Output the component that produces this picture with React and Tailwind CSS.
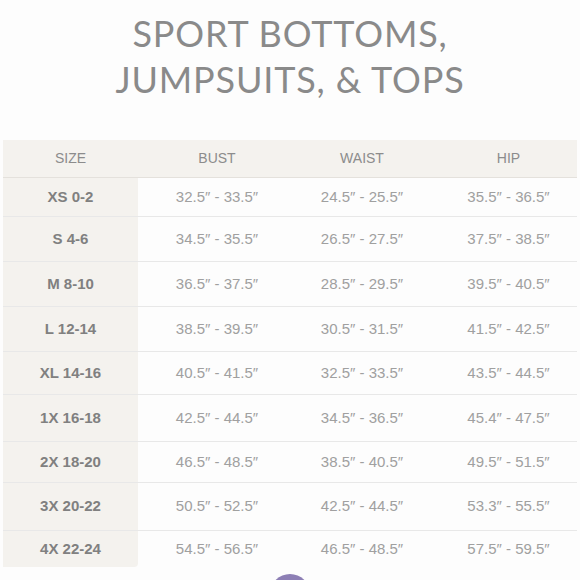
const rows = [
  { size: "XS 0-2", bust: "32.5\u2033 - 33.5\u2033", waist: "24.5\u2033 - 25.5\u2033", hip: "35.5\u2033 - 36.5\u2033", h: "h-[39px]" },
  { size: "S 4-6", bust: "34.5\u2033 - 35.5\u2033", waist: "26.5\u2033 - 27.5\u2033", hip: "37.5\u2033 - 38.5\u2033", h: "h-[45px]" },
  { size: "M 8-10", bust: "36.5\u2033 - 37.5\u2033", waist: "28.5\u2033 - 29.5\u2033", hip: "39.5\u2033 - 40.5\u2033", h: "h-[45px]" },
  { size: "L 12-14", bust: "38.5\u2033 - 39.5\u2033", waist: "30.5\u2033 - 31.5\u2033", hip: "41.5\u2033 - 42.5\u2033", h: "h-[45px]" },
  { size: "XL 14-16", bust: "40.5\u2033 - 41.5\u2033", waist: "32.5\u2033 - 33.5\u2033", hip: "43.5\u2033 - 44.5\u2033", h: "h-[43px]" },
  { size: "1X 16-18", bust: "42.5\u2033 - 44.5\u2033", waist: "34.5\u2033 - 36.5\u2033", hip: "45.4\u2033 - 47.5\u2033", h: "h-[47px]" },
  { size: "2X 18-20", bust: "46.5\u2033 - 48.5\u2033", waist: "38.5\u2033 - 40.5\u2033", hip: "49.5\u2033 - 51.5\u2033", h: "h-[41px]" },
  { size: "3X 20-22", bust: "50.5\u2033 - 52.5\u2033", waist: "42.5\u2033 - 44.5\u2033", hip: "53.3\u2033 - 55.5\u2033", h: "h-[48px]" },
  { size: "4X 22-24", bust: "54.5\u2033 - 56.5\u2033", waist: "46.5\u2033 - 48.5\u2033", hip: "57.5\u2033 - 59.5\u2033", h: "h-[36px]" },
];

const App = () => {
  return (
    <div className="w-[580px] h-[580px] overflow-hidden bg-[#fdfdfd] font-['Liberation_Sans',Arial,sans-serif] relative">
      {/* Title */}
      <div className="pt-[10px] text-center text-[#8a8a8a] text-[36px] leading-[46px] font-['Lato',sans-serif] tracking-[0.85px]">
        <div>SPORT BOTTOMS,</div>
        <div>JUMPSUITS, &amp; TOPS</div>
      </div>

      {/* Table */}
      <div className="mt-[38px] mx-[3px] w-[574px]">
        <div className="grid grid-cols-[135px_158px_132px_149px] h-[38px] items-center bg-[#f4f2ee] border-b border-[#e4e1dc] text-[14px] text-[#8c8c8c]">
          <div className="text-center">SIZE</div>
          <div className="text-center">BUST</div>
          <div className="text-center">WAIST</div>
          <div className="text-center pl-[12px]">HIP</div>
        </div>
        {rows.map((r, i) => (
          <div
            key={r.size}
            className={`grid grid-cols-[135px_158px_132px_149px] ${r.h} ${i < rows.length - 1 ? "border-b border-[#e8e8e8]" : ""} text-[15px]`}
          >
            <div className={`bg-[#f4f2ee] flex items-center justify-center font-bold text-[#808080] ${i === rows.length - 1 ? "rounded-br-[4px]" : ""}`}>
              {r.size}
            </div>
            <div className="flex items-center justify-center text-[#a0a0a0]">{r.bust}</div>
            <div className="flex items-center justify-center text-[#a0a0a0]">{r.waist}</div>
            <div className="flex items-center justify-center pl-[12px] text-[#a0a0a0]">{r.hip}</div>
          </div>
        ))}
      </div>

      {/* purple button peeking in at the bottom */}
      <div className="absolute left-[270px] top-[574px] w-[40px] h-[40px] rounded-full bg-[#8d7fb5]"></div>
    </div>
  );
};

export default App;
